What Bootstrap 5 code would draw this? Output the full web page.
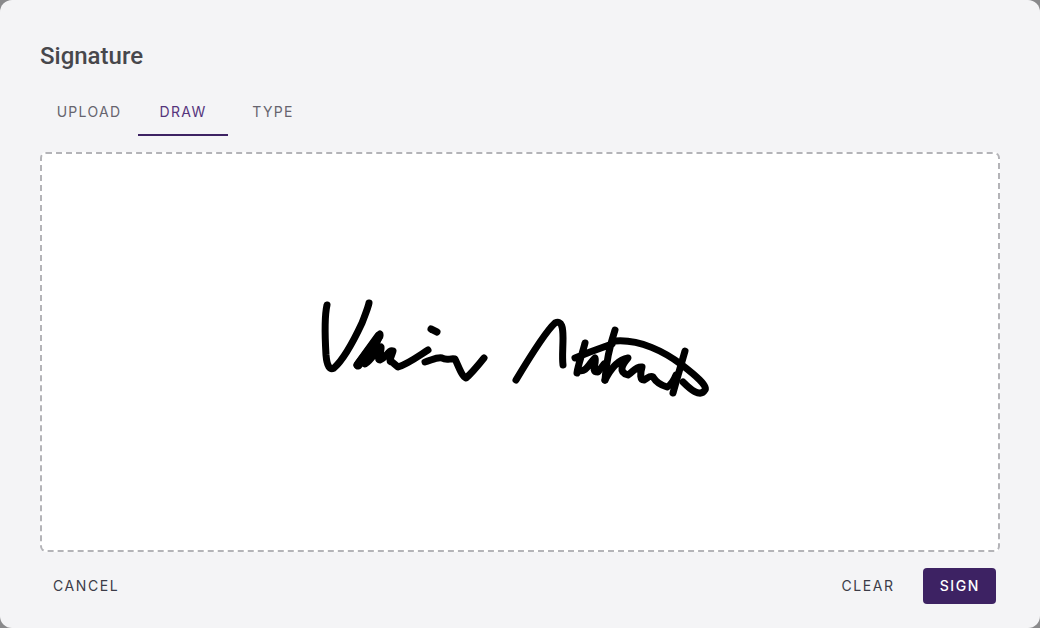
<!DOCTYPE html>
<html lang="en">
<head>
<meta charset="utf-8">
<title>Signature</title>
<link href="https://cdn.jsdelivr.net/npm/bootstrap@5.3.0/dist/css/bootstrap.min.css" rel="stylesheet">
<style>
html, body { height: 100%; margin: 0; }
body { background: #8a8a8c; overflow: hidden; }
.sig-dialog { width: 1040px; height: 628px; background: #f4f4f6; border: 0; border-radius: 12px; padding: 40px 40px 24px; }
.sig-title { font: 500 24px/32px Roboto, sans-serif; color: #47474c; margin: 0 0 16px; }
.sig-tabs { height: 48px; margin-bottom: 16px; }
.sig-tabs .nav-link { min-width: 90px; height: 48px; padding: 2px 0 0; border: 0; border-bottom: 2px solid transparent; border-radius: 0; background: none; font: 400 14px/44px Inter, sans-serif; letter-spacing: 1.3px; color: #66646e; text-align: center; white-space: nowrap; }
.sig-tabs .nav-item:first-child .nav-link { width: 98px; }
.sig-tabs .nav-link.active { color: #54347c; border-bottom-color: #3d2263; }
.sig-pad { height: 400px; background: #fff; border: 2px dashed #b4b4b8; border-radius: 6px; overflow: hidden; }
.sig-pad svg { display: block; width: 956px; height: 396px; }
.sig-foot { margin-top: 16px; height: 36px; padding-right: 4px; }
.sig-btn { height: 36px; padding: 0 12px 0 13px; border: 0; border-radius: 4px; font: 400 14px/36px Inter, sans-serif; letter-spacing: 1.6px; color: #3c3c48; background: none; }
.sig-btn:hover { color: #3c3c48; background: none; }
.sig-primary, .sig-primary:hover { background: #3d2263; color: #fff; padding: 0 16px 0 17px; font-weight: 500; }
.sig-stroke { fill: none; stroke: #000; stroke-width: 7; stroke-linecap: round; stroke-linejoin: round; }
.sig-heavy { stroke-width: 9; }
</style>
</head>
<body>
<div class="card sig-dialog">
  <h5 class="sig-title">Signature</h5>
  <ul class="nav sig-tabs">
    <li class="nav-item"><a class="nav-link" href="#">UPLOAD</a></li>
    <li class="nav-item"><a class="nav-link active" href="#">DRAW</a></li>
    <li class="nav-item"><a class="nav-link" href="#">TYPE</a></li>
  </ul>
  <div class="sig-pad">
    <svg viewBox="42 154 956 396" aria-label="Drawn signature">
      <g class="sig-stroke">
        <path d="M327 305C324 318 325 338 326 355C327 367 330 370 334 368C343 360 355 338 362 323C365 315 368 308 369 303"/>
        <path class="sig-heavy" d="M358 365L379 336"/>
        <path d="M357 365L380 334C378 344 368 356 365 364C372 360 376 350 381 347C382 352 376 360 380 360C386 358 389 349 393 351C391 358 388 362 392 362L398 367C408 364 420 355 428 350"/>
        <path d="M425 362C432 360 437 357 442 358C447 361 450 358 455 359C458 365 462 377 466 378C472 373 480 363 484 358"/>
        <path d="M431 329L437 332"/>
        <path d="M516 380C528 360 545 332 555 323C562 320 563 328 563 338C563 348 562 358 563 365"/>
        <path d="M615 341C640 339 665 352 682 365C695 375 708 386 705 390C700 398 690 389 683 382"/>
        <path d="M615 330C610 345 606 365 605 380M685 351C681 365 676 382 673 393M585 343C582 355 578 365 577 373M575 358L590 352L612 344"/>
        <path d="M578 370C586 374 590 362 595 358C597 363 590 372 598 372L604 364"/>
        <path d="M605 380C610 370 617 360 628 358C622 365 618 372 628 375C633 372 636 366 642 367C640 374 640 380 644 380C648 378 650 375 653 377C656 382 660 385 667 387C671 385 674 380 676 375"/>
      </g>
    </svg>
  </div>
  <div class="d-flex justify-content-between align-items-center sig-foot">
    <a class="btn sig-btn" href="#">CANCEL</a>
    <div class="d-flex align-items-center gap-3">
      <a class="btn sig-btn" href="#">CLEAR</a>
      <a class="btn sig-btn sig-primary" href="#">SIGN</a>
    </div>
  </div>
</div>
<script src="https://cdn.jsdelivr.net/npm/bootstrap@5.3.0/dist/js/bootstrap.bundle.min.js"></script>
</body>
</html>
